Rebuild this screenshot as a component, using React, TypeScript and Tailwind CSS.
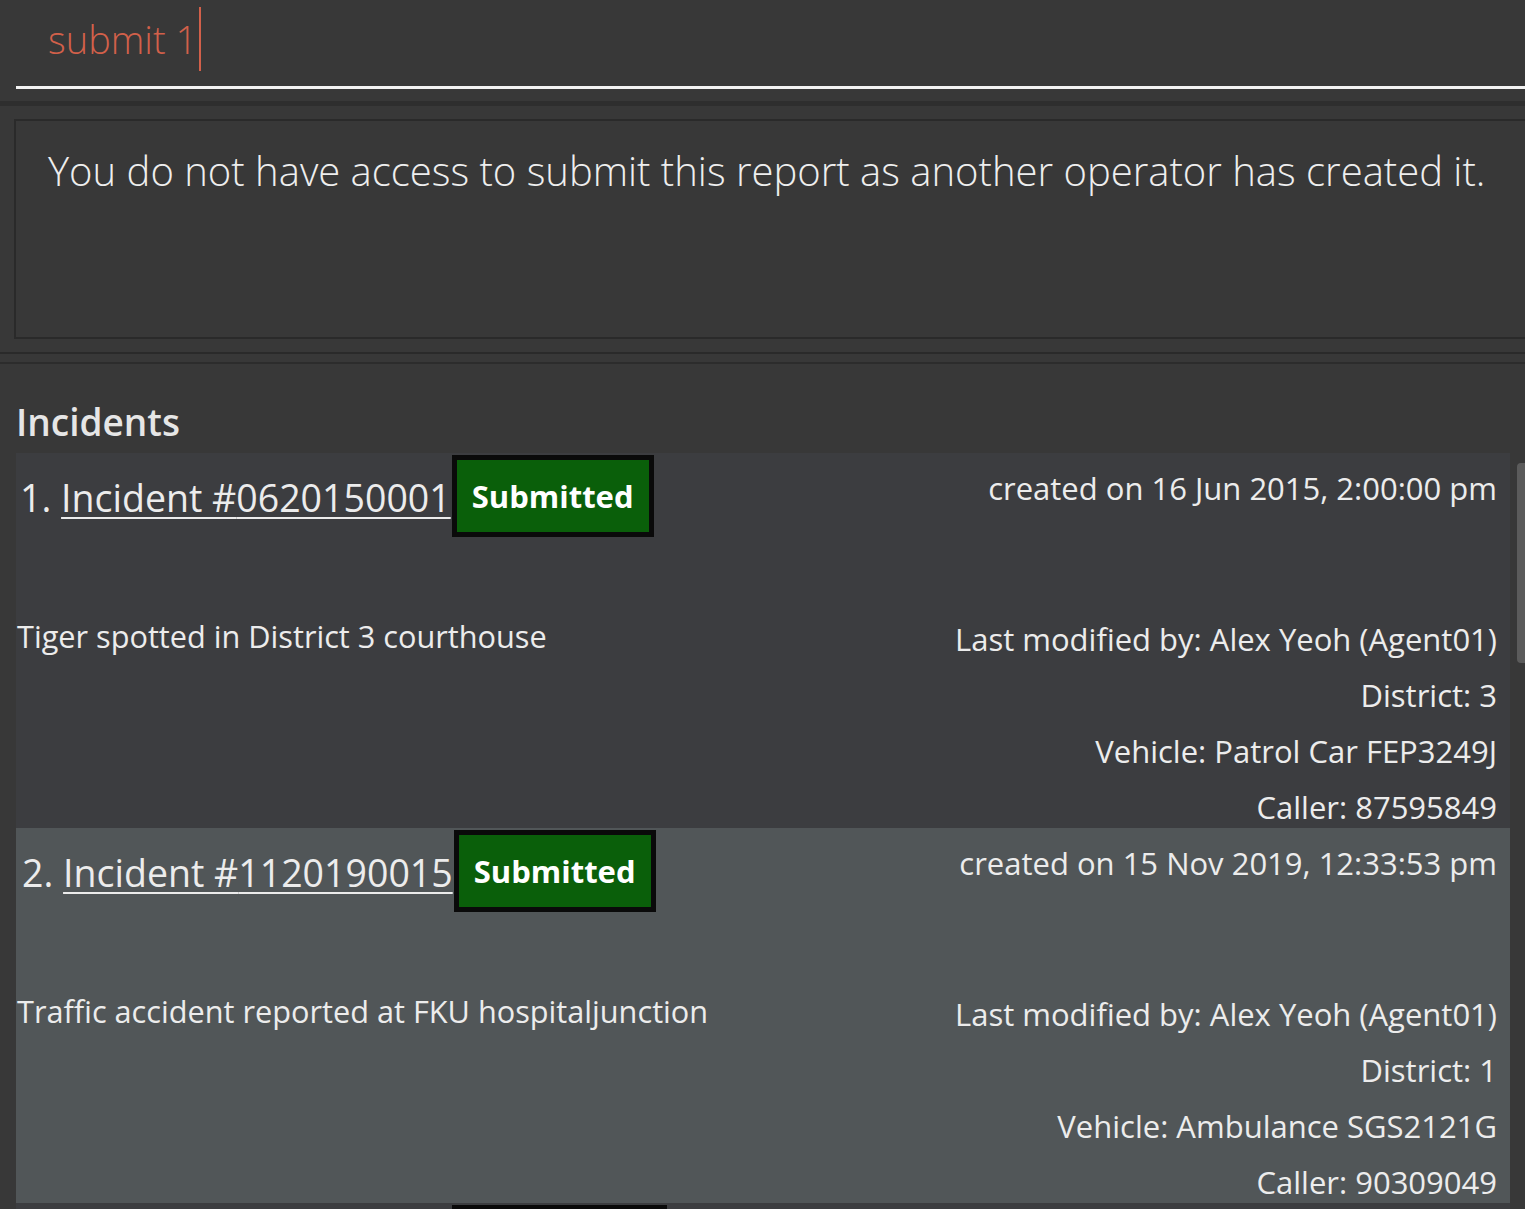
import React from 'react';

type Incident = {
  id: string;
  status: string;
  created: string;
  description: string;
  modifiedBy: string;
  district: string;
  vehicle: string;
  caller: string;
};

const incidents: Incident[] = [
  {
    id: '0620150001',
    status: 'Submitted',
    created: '16 Jun 2015, 2:00:00 pm',
    description: 'Tiger spotted in District 3 courthouse',
    modifiedBy: 'Alex Yeoh (Agent01)',
    district: '3',
    vehicle: 'Patrol Car FEP3249J',
    caller: '87595849',
  },
  {
    id: '1120190015',
    status: 'Submitted',
    created: '15 Nov 2019, 12:33:53 pm',
    description: 'Traffic accident reported at FKU hospitaljunction',
    modifiedBy: 'Alex Yeoh (Agent01)',
    district: '1',
    vehicle: 'Ambulance SGS2121G',
    caller: '90309049',
  },
  {
    id: '1220190016',
    status: 'Incomplete',
    created: '16 Dec 2019, 9:12:05 am',
    description: 'Robbery at convenience store',
    modifiedBy: 'Alex Yeoh (Agent01)',
    district: '2',
    vehicle: 'Patrol Car SFD1223K',
    caller: '91234567',
  },
];

function IncidentCard({ incident, index }: { incident: Incident; index: number }) {
  const even = index % 2 === 1;
  return (
    <div
      className={`h-[375px] overflow-hidden text-[#ececec] ${even ? 'bg-[#515658]' : 'bg-[#3c3d40]'}`}
    >
      {/* Header row */}
      <div className="flex items-start justify-between">
        <div className="flex items-center">
          <div className={`text-[37.5px] leading-[82px] pt-[4px] ${even ? 'pl-[6px]' : 'pl-[4px]'}`}>
            {index + 1}.{' '}
            <span className="underline decoration-2 underline-offset-[5px]">Incident #{incident.id}</span>
          </div>
          <div className="ml-[1px] h-[82px] border-[5px] border-[#0a0a0a] bg-[#0a5f0a] px-[15px] flex items-center">
            <span className="text-[31px] font-bold text-white">{incident.status}</span>
          </div>
        </div>
        <div className="pr-[13px] pt-[12px] text-[31px] leading-[46px]">created on {incident.created}</div>
      </div>

      {/* Details row */}
      <div className="mt-[72px] flex items-start justify-between">
        <div className="text-[30.7px] leading-[56px] pl-[1px] -mt-[3px]">{incident.description}</div>
        <div className="flex flex-col items-end pr-[13px] text-[31px] leading-[56px]">
          <div>Last modified by: {incident.modifiedBy}</div>
          <div>District: {incident.district}</div>
          <div>Vehicle: {incident.vehicle}</div>
          <div>Caller: {incident.caller}</div>
        </div>
      </div>
    </div>
  );
}

export default function App() {
  return (
    <div
      className="h-[1209px] w-[1525px] overflow-hidden bg-[#383838]"
      style={{ fontFamily: '"Open Sans", "Noto Sans", sans-serif' }}
    >
      {/* Command box */}
      <div className="h-[101px] pl-[16px]">
        <div className="flex h-[86px] items-center pl-[32px]">
          <span className="text-[38px] font-light text-[#d2604a] leading-none -mt-[8px]">submit 1</span>
          <span className="ml-[2px] h-[64px] w-[2px] bg-[#d2604a] -mt-[8px]" />
        </div>
        <div className="h-[3px] bg-[#f2f2f2]" />
      </div>
      <div className="h-[5px] bg-[#2e2e2e]" />

      {/* Result display */}
      <div className="pt-[13px] pl-[14px] pb-[13px]">
        <div className="h-[220px] border-2 border-r-0 border-[#2a2a2a] pl-[32px] pt-[22px]">
          <div className="text-[40px] font-light text-[#eeeeee] leading-[56px]">
            You do not have access to submit this report as another operator has created it.
          </div>
        </div>
      </div>
      <div className="h-[2px] bg-[#2a2a2a]" />
      <div className="h-[8px]" />
      <div className="h-[2px] bg-[#2c2c2c]" />

      {/* Incident list */}
      <div className="flex">
        <div className="w-[1510px] pl-[16px]">
          <div className="h-[89px] pt-[33px] text-[37px] font-semibold leading-[50px] text-[#e6e6e6]">Incidents</div>
          {incidents.map((inc, i) => (
            <IncidentCard key={inc.id} incident={inc} index={i} />
          ))}
        </div>
        <div className="flex-1 pt-[99px] pl-[7px]">
          <div className="h-[200px] w-[8px] rounded-l-[4px] bg-[#5b5b5b]" />
        </div>
      </div>
    </div>
  );
}
